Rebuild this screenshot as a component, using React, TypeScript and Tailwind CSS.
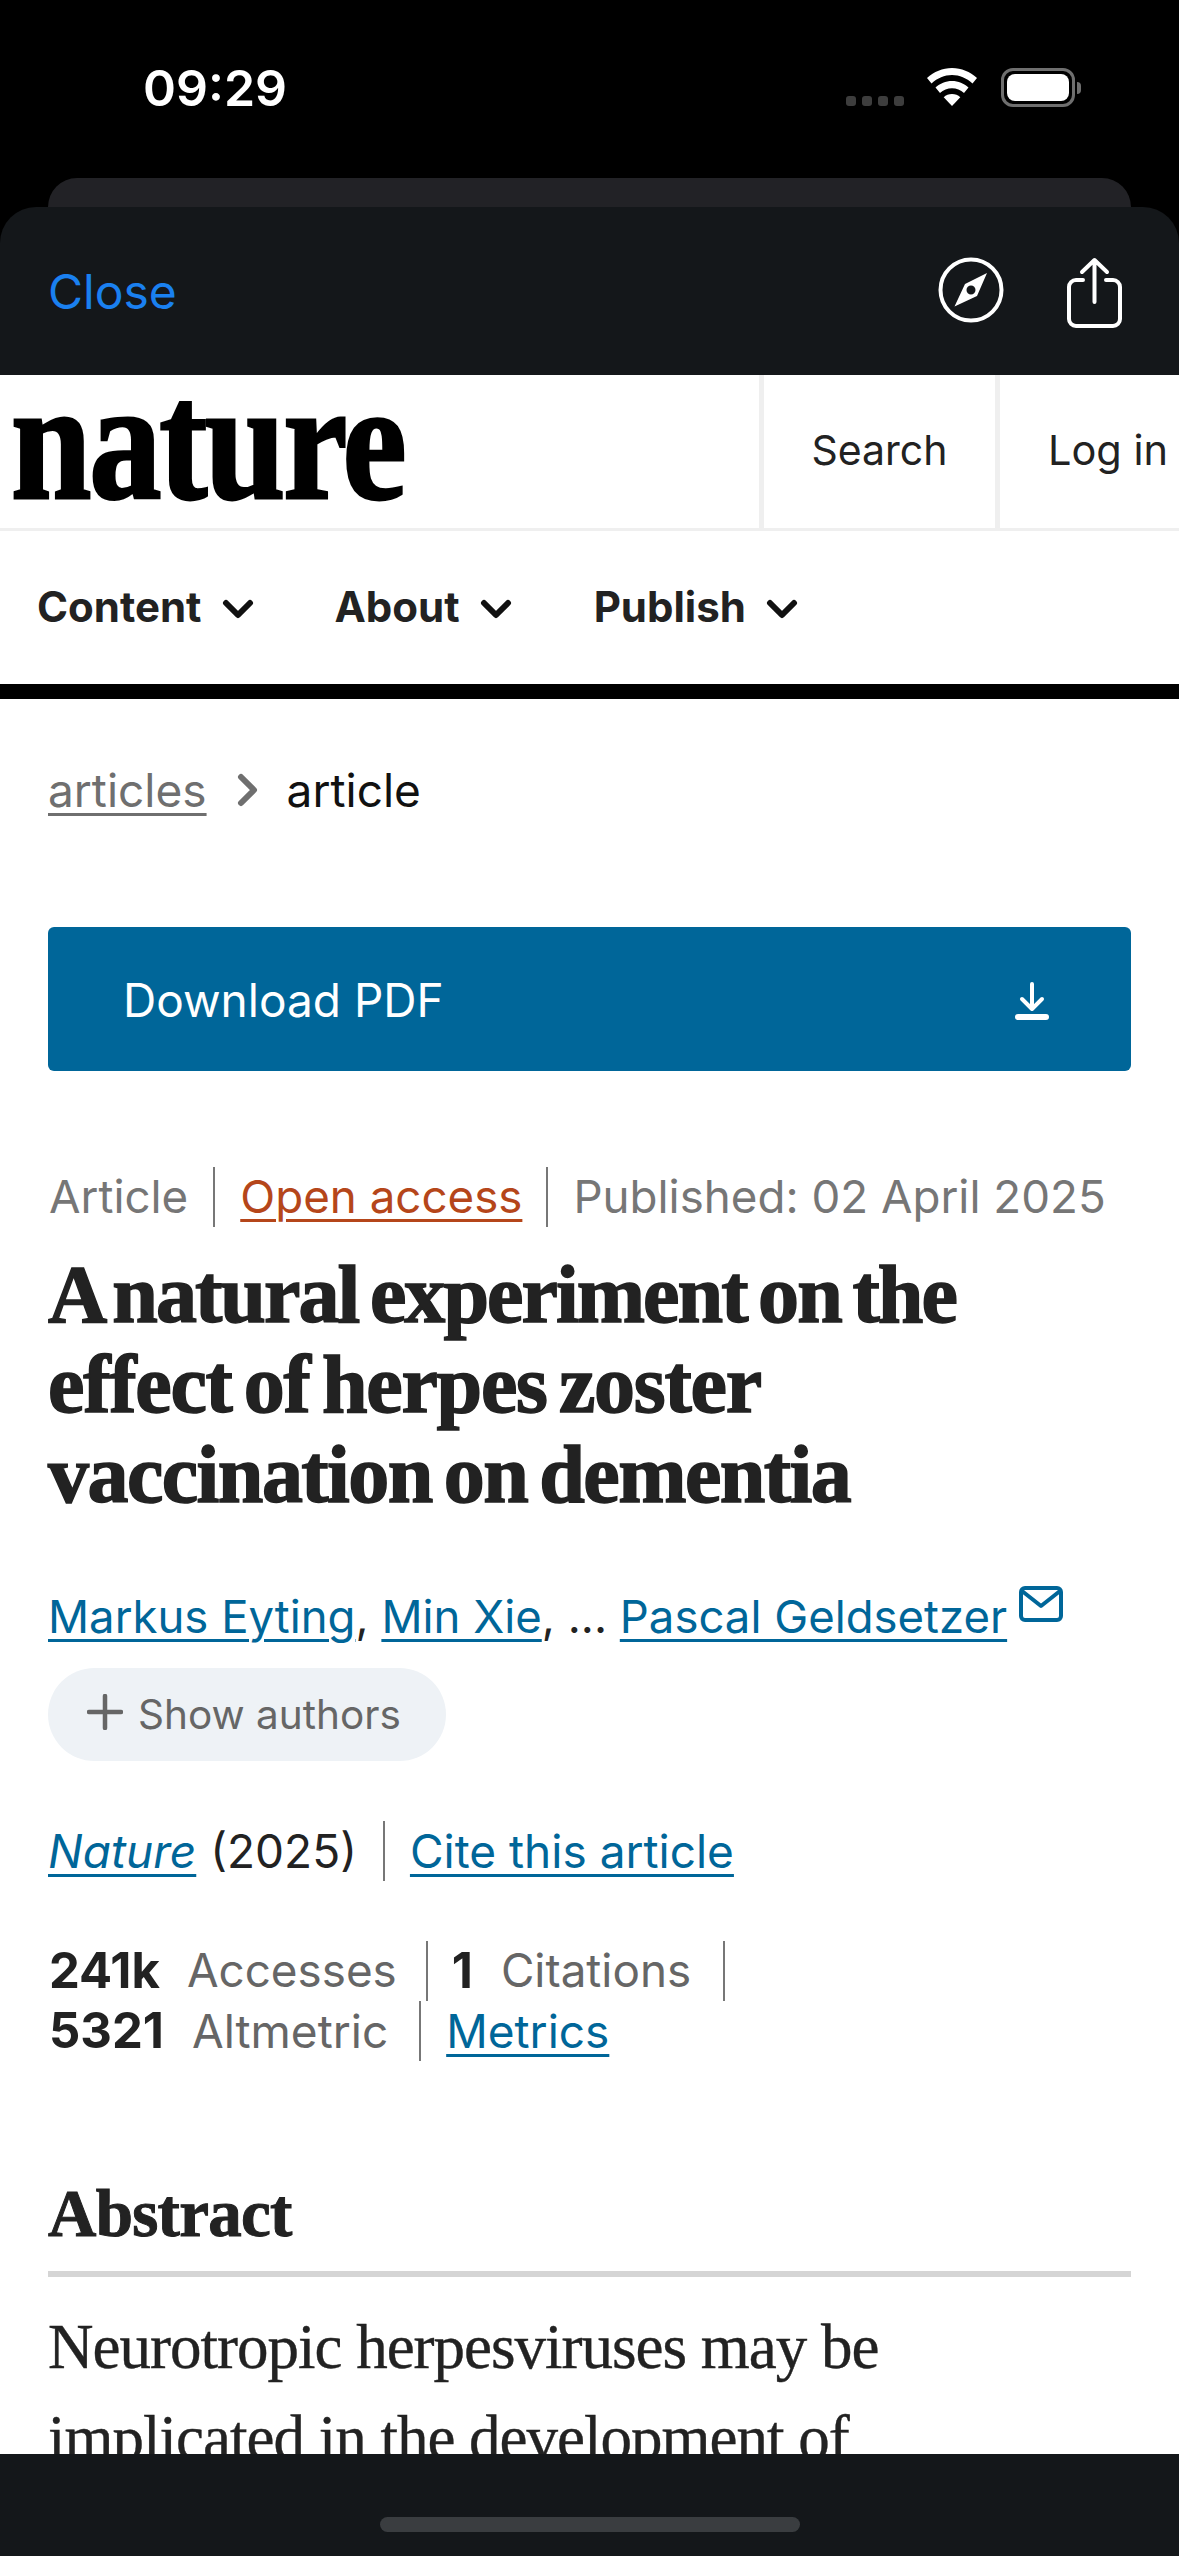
const sans = "font-['Inter',sans-serif]";
const serif = "font-['Liberation_Serif',serif]";
const link = "underline underline-offset-[6px] decoration-[3px] text-[#006699]";

function Wifi() {
  return (
    <svg width="50" height="38" viewBox="0 0 50 38" fill="#fff">
      <path d="M25 0C15.500 0 7 3.700 0 10l4.500 5.500C10.500 10 17.500 7 25 7s14.500 3 20.500 8.500L50 10C43 3.700 34.500 0 25 0z" />
      <path d="M25 13c-6.300 0-12 2.500-16.500 6.500L13 25c3.300-3 7.500-4.800 12-4.800s8.700 1.800 12 4.800l4.500-5.500C37 15.500 31.300 13 25 13z" />
      <path d="M25 26c-3.200 0-6 1.200-8.300 3.200L25 38l8.300-8.800C31 27.200 28.200 26 25 26z" />
    </svg>
  );
}

function Battery() {
  return (
    <div className="flex items-center">
      <div className="w-[74px] h-[39px] rounded-[12px] border-[3px] border-[#6f6f6f] p-[3px]">
        <div className="w-full h-full bg-white rounded-[8px]" />
      </div>
      <div className="w-[4px] h-[12px] ml-[2px] bg-[#6f6f6f] rounded-r-full" />
    </div>
  );
}

function Compass() {
  return (
    <svg width="66" height="66" viewBox="0 0 66 66">
      <circle cx="33" cy="33" r="30.500" fill="none" stroke="#fff" strokeWidth="4" />
      <path fillRule="evenodd" fill="#fff" d="M49 16L27 27 16.500 49.500 39 39 49 16zM33 28.500a4.500 4.500 0 1 0 0 9 4.500 4.500 0 0 0 0-9z" />
    </svg>
  );
}

function Share() {
  return (
    <svg width="58" height="72" viewBox="0 0 58 72" fill="none" stroke="#fff" strokeWidth="4" strokeLinecap="round" strokeLinejoin="round">
      <path d="M19 23h-7a7 7 0 0 0-7 7v32a7 7 0 0 0 7 7h37a7 7 0 0 0 7-7V30a7 7 0 0 0-7-7h-7" />
      <path d="M30.500 45V3M18 15L30.500 3 43 15" />
    </svg>
  );
}

function Chevron() {
  return (
    <svg width="32" height="22" viewBox="0 0 32 22" fill="none" stroke="#111" strokeWidth="6" strokeLinecap="round" strokeLinejoin="round">
      <path d="M4 5l12 12L28 5" />
    </svg>
  );
}

function NavItem({ label, gap }: { label: string; gap: string }) {
  return (
    <div className={`flex items-center gap-[20px] ${gap}`}>
      <span className="text-[42px] leading-[52px] font-bold text-[#222]">{label}</span>
      <div className="pt-[4px]"><Chevron /></div>
    </div>
  );
}

function Sep({ cls = "" }: { cls?: string }) {
  return <span className={`block w-[2px] h-[60px] bg-[#777] shrink-0 ${cls}`} />;
}

export default function App() {
  return (
    <div className={`w-[1179px] h-[2556px] bg-black overflow-hidden flex flex-col ${sans}`}>
      <div className="h-[178px] shrink-0 relative">
        <div className="flex items-start justify-between pl-[143px] pr-[98px] pt-[58px]">
          <span className="text-[50px] leading-[60px] font-semibold text-white">09:29</span>
          <div className="flex items-start pt-[10px]">
            <div className="flex gap-[6px] mt-[28px] mr-[23px]">
              <span className="w-[10px] h-[10px] rounded-[3px] bg-[#3d3d3d]" />
              <span className="w-[10px] h-[10px] rounded-[3px] bg-[#3d3d3d]" />
              <span className="w-[10px] h-[10px] rounded-[3px] bg-[#3d3d3d]" />
              <span className="w-[10px] h-[10px] rounded-[3px] bg-[#3d3d3d]" />
            </div>
            <div className="mr-[24px]"><Wifi /></div>
            <Battery />
          </div>
        </div>
      </div>
      <div className="mx-[48px] h-[29px] shrink-0 bg-[#222226] rounded-t-[30px]" />
      <div className="h-[168px] shrink-0 bg-[#14171a] rounded-t-[36px] flex items-center justify-between pl-[48px] pr-[57px] pt-[2px]">
        <span className="text-[48px] leading-[60px] text-[#1a80f0] font-normal">Close</span>
        <div className="flex items-center gap-[60px]">
          <div className="pb-[4px]"><Compass /></div>
          <div className="pt-[1px]"><Share /></div>
        </div>
      </div>

      <div className="flex-1 min-h-0 bg-white overflow-hidden">
        <div className="flex h-[153px]">
          <div className="w-[759px] pl-[11px]">
            <div className={`${serif} font-bold text-[170px] leading-[132px] tracking-[-2.600px] text-black [-webkit-text-stroke:3px_#000] origin-left scale-x-[0.85] whitespace-nowrap`}>nature</div>
          </div>
          <div className="w-[241px] border-x-[5px] border-[#efefef] flex items-center justify-center pb-[2px]">
            <span className="text-[41px] text-[#222]">Search</span>
          </div>
          <div className="flex-1 flex items-center pl-[48px] pb-[2px]">
            <span className="text-[41.500px] text-[#222] whitespace-nowrap">Log in</span>
          </div>
        </div>
        <div className="h-[3px] bg-[#efefef]" />
        <div className="h-[153px] flex items-center pl-[37px] pb-[2px]">
          <NavItem label="Content" gap="mr-[81px]" />
          <NavItem label="About" gap="mr-[82px]" />
          <NavItem label="Publish" gap="" />
        </div>
        <div className="h-[15px] bg-black" />

        <div className="px-[48px]">
          <div className="flex items-center h-[56px] mt-[63px] text-[46px]">
            <span className="underline underline-offset-[6px] decoration-[3px] text-[#6f6f6f]">articles</span>
            <svg className="ml-[29px] mr-[27px]" width="24" height="36" viewBox="0 0 24 36" fill="none" stroke="#6f6f6f" strokeWidth="6" strokeLinecap="round" strokeLinejoin="round"><path d="M5 5l13 13L5 31" /></svg>
            <span className="text-[#111]">article</span>
          </div>

          <div className="mt-[109px] h-[144px] bg-[#006699] rounded-[6px] flex items-center justify-between pl-[75px] pr-[82px] pt-[2px]">
            <span className="text-[46px] text-white">Download PDF</span>
            <svg width="34" height="40" viewBox="0 0 34 40" fill="none" stroke="#fff" strokeLinecap="round" strokeLinejoin="round" className="mt-[2px]">
              <path d="M17 3v24M7 18l10 10 10-10" strokeWidth="4" />
              <path d="M3 36h28" strokeWidth="6" />
            </svg>
          </div>

          <div className="mt-[96px] h-[60px] flex items-center text-[45.700px] text-[#767676]">
            <span className="pl-[1px]">Article</span>
            <Sep cls="ml-[25px] mr-[25px]" />
            <span className="underline underline-offset-[6px] decoration-[3px] text-[#b5461a]">Open access</span>
            <Sep cls="ml-[24px] mr-[25px]" />
            <span>Published: 02 April 2025</span>
          </div>

          <h1 className={`mt-[23px] ${serif} font-bold text-[#222] text-[82px] leading-[90px] [-webkit-text-stroke:1.5px_#222] [word-spacing:-7px] whitespace-nowrap`}>
            <span className="block tracking-[-1.950px]">A natural experiment on the</span>
            <span className="block tracking-[-1.250px]">effect of herpes zoster</span>
            <span className="block tracking-[-1.550px]">vaccination on dementia</span>
          </h1>

          <div className="mt-[69px] h-[56px] flex items-center text-[45.500px] text-[#222] whitespace-nowrap">
            <a className={link}>Markus Eyting</a>
            <span>,&nbsp;</span>
            <a className={link}>Min Xie</a>
            <span>, ...&nbsp;</span>
            <a className={link}>Pascal Geldsetzer</a>
            <svg className="ml-[12px] -mt-[26px]" width="44" height="36" viewBox="0 0 44 36" fill="none" stroke="#006699" strokeWidth="4" strokeLinejoin="round"><rect x="2" y="2" width="40" height="32" rx="4" /><path d="M3 5l19 15L41 5" /></svg>
          </div>

          <div className="mt-[23px] w-[398px] h-[93px] rounded-full bg-[#eef2f6] flex items-center pl-[39px] text-[40.500px] text-[#666]">
            <svg width="36" height="36" viewBox="0 0 36 36" fill="none" stroke="#666" strokeWidth="4.500" strokeLinecap="round" className="mr-[15px] -mt-[6px]"><path d="M18 2v32M2 18h32" /></svg>
            <span className="leading-[50px]">Show authors</span>
          </div>

          <div className="mt-[60px] h-[60px] flex items-center text-[46px] text-[#222]">
            <a className={`italic ${link}`}>Nature</a>
            <span className="ml-[14px]">(2025)</span>
            <Sep cls="ml-[26px] mr-[25px]" />
            <a className={link}>Cite this article</a>
          </div>

          <div className="mt-[60px] h-[60px] flex items-center text-[45.800px] text-[#666]">
            <b className="font-bold text-[49px] text-[#222] pl-[1px]">241k</b>
            <span className="ml-[27px]">Accesses</span>
            <Sep cls="ml-[29px] mr-[24px]" />
            <b className="font-bold text-[49px] text-[#222]">1</b>
            <span className="ml-[28px]">Citations</span>
            <Sep cls="ml-[32px]" />
          </div>
          <div className="h-[60px] flex items-center text-[46px] text-[#666]">
            <b className="font-bold text-[49px] text-[#222] pl-[1px]">5321</b>
            <span className="ml-[28px]">Altmetric</span>
            <Sep cls="ml-[31px] mr-[25px]" />
            <a className={link}>Metrics</a>
          </div>

          <h2 className={`mt-[117px] ${serif} font-bold text-[#222] text-[67px] leading-[70px] tracking-[-0.700px] [-webkit-text-stroke:1px_#222]`}>Abstract</h2>
          <div className="mt-[23px] h-[6px] bg-[#d5d5d5]" />
          <p className={`mt-[25px] ${serif} text-[#222] text-[63px] leading-[91px] tracking-[-1px] [-webkit-text-stroke:0.4px_#222] whitespace-nowrap`}>
            Neurotropic herpesviruses may be<br />implicated in the development of
          </p>
        </div>
      </div>

      <div className="h-[102px] shrink-0 bg-[#14171a] flex justify-center pt-[63px]">
        <div className="w-[420px] h-[15px] rounded-full bg-[#3a3d40]" />
      </div>
    </div>
  );
}
